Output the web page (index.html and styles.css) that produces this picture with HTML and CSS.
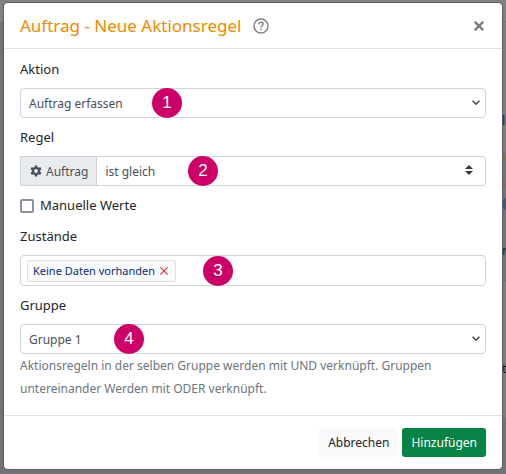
FILE: index.html
```html
<!DOCTYPE html>
<html lang="de">
<head>
    <meta charset="UTF-8">
    <meta name="viewport" content="width=device-width, initial-scale=1.0">
    <title>Auftrag - Neue Aktionsregel</title>
    <link rel="stylesheet" href="styles.css">
</head>
<body>
    <!-- abgedunkelte Seite hinter dem Dialog -->
    <div class="page" aria-hidden="true">
        <div class="page-top"></div>
        <div class="page-side">
            <span class="page-text page-text-first">le</span>
            <svg class="page-map" viewBox="0 0 4 130" preserveAspectRatio="none">
                <path d="M0 3L4 7M0 31L4 34" stroke="#8a6c42" stroke-width="3"/>
                <path d="M0 48L4 46V58L0 56Z" fill="#41587f"/>
            </svg>
            <span class="page-text page-text-over">r</span>
            <span class="page-text page-text-last">t</span>
        </div>
    </div>

    <div class="modal" role="dialog" aria-labelledby="modal-title">
        <form>
            <header class="modal-header">
                <h1 class="modal-title" id="modal-title">Auftrag - Neue Aktionsregel</h1>
                <a class="help" href="#" aria-label="Hilfe">
                    <svg width="16" height="16" viewBox="0 0 16 16" fill="none" stroke="#7c8086">
                        <circle cx="8" cy="8" r="7" stroke-width="1.4"/>
                        <path d="M5.800 6.200C5.900 4.900 6.800 4.200 8 4.200c1.300 0 2.200.8 2.200 1.900 0 1.600-2.100 1.700-2.100 3.300" stroke-width="1.4"/>
                        <path d="M7.300 11.500h1.500" stroke-width="1.5"/>
                    </svg>
                </a>
                <button type="button" class="close" aria-label="Schließen">
                    <svg width="10" height="10" viewBox="0 0 10 10" stroke="#7c7c7c" stroke-width="2.4">
                        <path d="M.8.8l8.400 8.400M9.200.8L.8 9.200"/>
                    </svg>
                </button>
            </header>

            <div class="modal-body">
                <div class="group">
                    <label for="aktion">Aktion</label>
                    <div class="field">
                        <select id="aktion" class="control">
                            <option>Auftrag erfassen</option>
                        </select>
                        <svg class="chevron" width="8" height="6" viewBox="0 0 8 6" fill="none" stroke="#43474d" stroke-width="1.6"><path d="M.6.8L4 4.200 7.400.8"/></svg>
                        <span class="step step-1">1</span>
                    </div>
                </div>

                <div class="group">
                    <label for="regel">Regel</label>
                    <div class="field">
                        <span class="prefix">
                            <svg width="12" height="12" viewBox="0 0 12 12" fill="none" stroke="#495057">
                                <circle cx="6" cy="6" r="3.1" stroke-width="2.4"/>
                                <path d="M6 .4v2M6 9.600v2M1.150 3.200l1.700 1M9.150 7.800l1.700 1M1.150 8.800l1.700-1M9.150 4.200l1.700-1" stroke-width="2.6"/>
                            </svg>
                            Auftrag
                        </span>
                        <select id="regel" class="control control-joined">
                            <option>ist gleich</option>
                        </select>
                        <svg class="sorter" width="8" height="10" viewBox="0 0 8 10" fill="#343a40"><path d="M0 4l4-4 4 4zM0 6h8l-4 4z"/></svg>
                        <span class="step step-2">2</span>
                    </div>
                </div>

                <div class="check">
                    <input type="checkbox" id="manuell">
                    <label for="manuell">Manuelle Werte</label>
                </div>

                <div class="group">
                    <label for="zustaende">Zustände</label>
                    <div class="field tags">
                        <span class="tag">Keine Daten vorhanden
                            <button type="button" class="tag-remove" aria-label="Entfernen">
                                <svg width="8" height="8" viewBox="0 0 8 8" stroke="#dc3545" stroke-width="1.2"><path d="M.4.4l7.200 7.200M7.600.4L.4 7.600"/></svg>
                            </button>
                        </span>
                        <input type="text" id="zustaende" class="tags-input">
                        <span class="step step-3">3</span>
                    </div>
                </div>

                <div class="group">
                    <label for="gruppe">Gruppe</label>
                    <div class="field">
                        <select id="gruppe" class="control" aria-describedby="gruppe-hilfe">
                            <option>Gruppe 1</option>
                        </select>
                        <svg class="chevron" width="8" height="6" viewBox="0 0 8 6" fill="none" stroke="#43474d" stroke-width="1.6"><path d="M.6.8L4 4.200 7.400.8"/></svg>
                        <span class="step step-4">4</span>
                    </div>
                    <p class="hint" id="gruppe-hilfe">Aktionsregeln in der selben Gruppe werden mit UND verknüpft. Gruppen untereinander Werden mit ODER verknüpft.</p>
                </div>
            </div>

            <footer class="modal-footer">
                <button type="button" class="btn btn-light">Abbrechen</button>
                <button type="submit" class="btn btn-success">Hinzufügen</button>
            </footer>
        </form>
    </div>
</body>
</html>
```
FILE: styles.css
```css
* {
    box-sizing: border-box;
}

body {
    margin: 0;
    font-family: "Noto Sans", "Open Sans", sans-serif;
    font-size: 13px;
    line-height: 23px;
    color: #212529;
    background-color: #727379;
}

button, input, select {
    font: inherit;
    margin: 0;
}

/* Hintergrund */
.page {
    position: absolute;
    inset: 0;
    display: flex;
    flex-direction: column;
    overflow: hidden;
}

.page-top {
    height: 22px;
    flex-shrink: 0;
    background-color: #828282;
    border-bottom: 1px solid #75767a;
}

.page-side {
    align-self: flex-end;
    display: flex;
    flex-direction: column;
    width: 4px;
    height: 396px;
    background-color: #7f7d7d;
}

.page-text {
    line-height: 20px;
    color: #1d1f21;
}

.page-text-first {
    margin-top: 88px;
    margin-bottom: 22px;
}

.page-text-over {
    margin-top: -42px;
}

.page-text-last {
    margin-top: 98px;
}

.page-map {
    width: 4px;
    height: 130px;
    flex-shrink: 0;
    background-color: #6f7578;
}

/* Dialog */
.modal {
    position: relative;
    margin: 3px 4px 5px;
    background-color: #fff;
    border-radius: 4px;
    box-shadow: 0 0 0 1px #5d5e62;
}

.modal-header {
    display: flex;
    align-items: center;
    padding: 11px 16px;
    border-bottom: 1px solid #dee2e6;
}

.modal-title {
    margin: 0;
    font-size: 17px;
    font-weight: 400;
    color: #ef8a00;
}

.help {
    display: flex;
    margin-left: 12px;
}

.close {
    display: flex;
    margin-left: auto;
    padding: 2px;
    border: 0;
    background: none;
}

.modal-body {
    padding: 9px 16px 15px;
}

.group {
    margin-bottom: 8px;
}

.group label {
    display: block;
    margin-bottom: 7px;
}

.group:last-child {
    margin-bottom: 0;
}

.field {
    position: relative;
    display: flex;
    font-size: 12px;
}

.control {
    flex: 1;
    min-width: 0;
    height: 30px;
    padding: 0 8px;
    border: 1px solid #ced4da;
    border-radius: 4px;
    background-color: #fff;
    color: #495057;
    appearance: none;
}

.control-joined {
    border-left: 0;
    border-radius: 0 4px 4px 0;
}

.prefix {
    display: flex;
    align-items: center;
    gap: 4px;
    padding: 0 8px 0 9px;
    border: 1px solid #ced4da;
    background-color: #e9ecef;
    color: #495057;
}

.chevron {
    position: absolute;
    right: 6px;
    top: 12px;
}

.sorter {
    position: absolute;
    right: 13px;
    top: 9px;
}

/* Nummern der Schritte */
.step {
    position: absolute;
    top: 0;
    width: 30px;
    height: 30px;
    border-radius: 50%;
    background-color: #cc0066;
    color: #fff;
    font-family: "Liberation Sans", Arial, sans-serif;
    font-size: 17px;
    line-height: 30px;
    text-align: center;
}

.step-1 {
    left: 132px;
}

.step-2 {
    left: 168px;
}

.step-3 {
    left: 182px;
}

.step-4 {
    left: 94px;
}

.check {
    display: flex;
    align-items: center;
    gap: 6px;
    margin-bottom: 8px;
}

.check input {
    width: 14px;
    height: 14px;
    border: 2px solid #8f8f9d;
    border-radius: 2px;
    background-color: #fff;
    appearance: none;
}

.tags {
    align-items: center;
    height: 31px;
    padding: 0 6px;
    border: 1px solid #ced4da;
    border-radius: 4px;
}

.tag {
    display: flex;
    align-items: center;
    gap: 5px;
    padding: 0 7px 0 5px;
    border: 1px solid #dee2e6;
    border-radius: 2px;
    background-color: #f8f9fa;
    color: #0b2e6f;
    font-size: 11px;
    line-height: 20px;
    white-space: nowrap;
}

.tag-remove {
    display: flex;
    padding: 0;
    border: 0;
    background: none;
}

.tags-input {
    flex: 1;
    min-width: 0;
    border: 0;
    outline: 0;
    background: none;
}

.hint {
    margin: 0;
    color: #6c757d;
    font-size: 12px;
}

.modal-footer {
    display: flex;
    justify-content: flex-end;
    gap: 4px;
    padding: 12px 16px;
    border-top: 1px solid #dee2e6;
}

.btn {
    height: 29px;
    padding: 0 9px;
    border: 0;
    border-radius: 3px;
    font-size: 12px;
}

.btn-light {
    background-color: #f8f9fa;
    color: #212529;
}

.btn-success {
    background-color: #078345;
    color: #fff;
}
```
